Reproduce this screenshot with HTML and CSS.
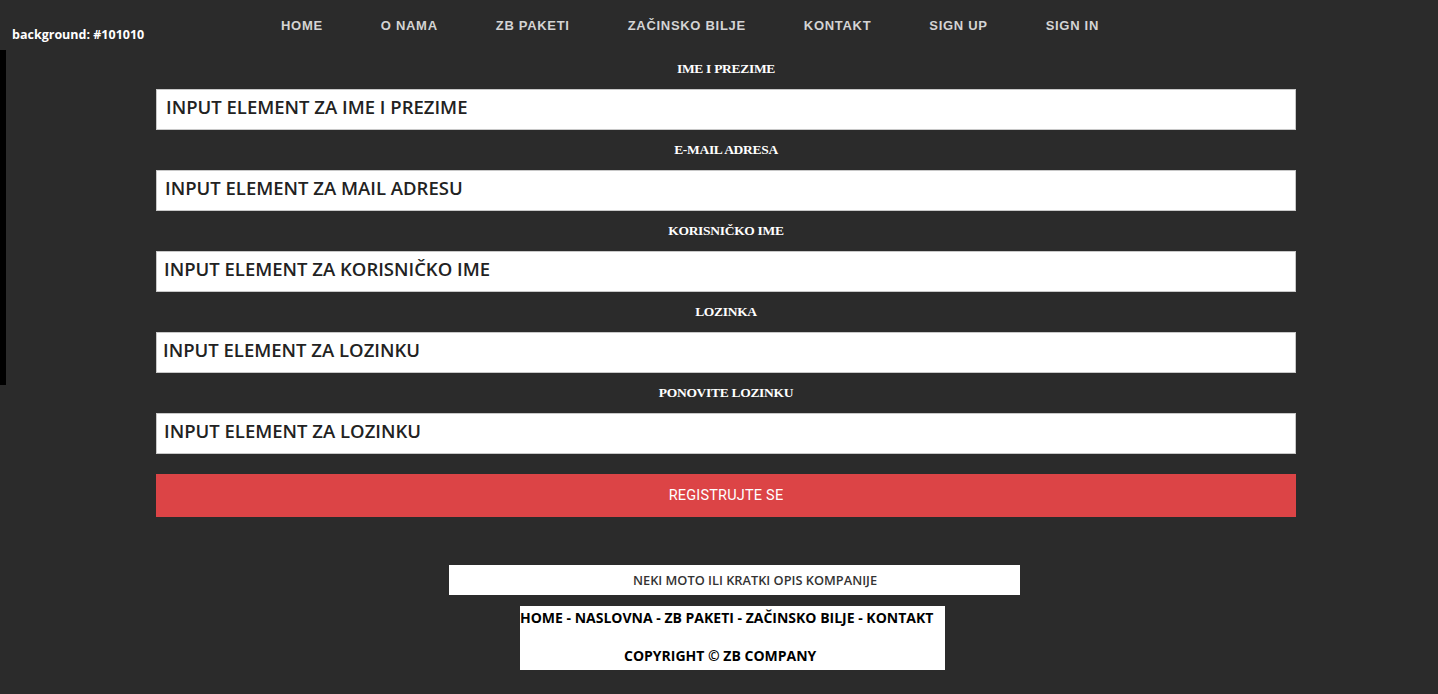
FILE: index.html
```html
<!DOCTYPE html>
<html lang="sr">
<head>
<meta charset="utf-8">
<title>Sign up</title>
<link rel="stylesheet" href="styles.css">
</head>
<body>
<div class="note">background: #101010</div>
<div class="side-bar"></div>
<header class="top">
  <nav class="nav">
    <a href="#">HOME</a>
    <a href="#">O NAMA</a>
    <a href="#">ZB PAKETI</a>
    <a href="#">ZAČINSKO BILJE</a>
    <a href="#">KONTAKT</a>
    <a href="#">SIGN UP</a>
    <a href="#">SIGN IN</a>
  </nav>
</header>
<form class="form">
  <label class="lbl">IME I PREZIME</label>
  <div class="field"><span class="t1">INPUT ELEMENT ZA IME I PREZIME</span></div>
  <label class="lbl">E-MAIL ADRESA</label>
  <div class="field"><span class="t2">INPUT ELEMENT ZA MAIL ADRESU</span></div>
  <label class="lbl">KORISNIČKO IME</label>
  <div class="field"><span class="t3">INPUT ELEMENT ZA KORISNIČKO IME</span></div>
  <label class="lbl">LOZINKA</label>
  <div class="field"><span class="t4">INPUT ELEMENT ZA LOZINKU</span></div>
  <label class="lbl">PONOVITE LOZINKU</label>
  <div class="field"><span class="t3">INPUT ELEMENT ZA LOZINKU</span></div>
  <button type="button" class="btn">REGISTRUJTE SE</button>
</form>
<footer class="foot">
  <div class="moto">NEKI MOTO ILI KRATKI OPIS KOMPANIJE</div>
  <div class="links">
    <div class="links-row">HOME - NASLOVNA - ZB PAKETI - ZAČINSKO BILJE - KONTAKT</div>
    <div class="copy">COPYRIGHT © ZB COMPANY</div>
  </div>
</footer>
</body>
</html>
```
FILE: styles.css
```css
* { box-sizing: border-box; }
html, body { margin: 0; padding: 0; }
body {
  background: #2b2b2b;
  width: 1438px;
  height: 694px;
  overflow: hidden;
  position: relative;
  font-family: "Open Sans", "Liberation Sans", sans-serif;
}
.note {
  position: absolute;
  left: 12px;
  top: 26px;
  color: #fff;
  font-family: "Open Sans", sans-serif;
  font-weight: 700;
  font-size: 12.5px;
  line-height: 18px;
}
.side-bar {
  position: absolute;
  left: 0;
  top: 50px;
  width: 6px;
  height: 335px;
  background: #000;
}
.top {
  height: 49px;
}
.nav {
  display: flex;
  padding-left: 281px;
  padding-top: 17px;
  gap: 58px;
}
.nav a {
  color: #d4d4d4;
  text-decoration: none;
  font-family: "Liberation Sans", Arial, sans-serif;
  font-weight: 700;
  font-size: 13px;
  line-height: 17px;
  letter-spacing: 0.7px;
}
.form {
  margin-left: 156px;
  width: 1140px;
  display: flex;
  flex-direction: column;
}
.lbl {
  display: block;
  height: 40px;
  line-height: 40px;
  text-align: center;
  color: #fff;
  font-family: "Liberation Serif", "Times New Roman", serif;
  font-weight: 700;
  font-size: 13.5px;
  letter-spacing: -0.3px;
}
.field {
  height: 41px;
  background: #fff;
  border: 1px solid #c8c8c8;
  display: flex;
  align-items: center;
  padding-bottom: 7px;
  color: #222;
  font-family: "Open Sans", sans-serif;
  font-weight: 600;
  font-size: 18.5px;
}
.t1 { padding-left: 9px; }
.t2 { padding-left: 8px; }
.t3 { padding-left: 7px; }
.t4 { padding-left: 6px; }
.btn {
  margin-top: 20px;
  height: 43px;
  border: 0;
  background: #dc4446;
  color: #fff;
  font-family: Roboto, "Liberation Sans", sans-serif;
  font-size: 14.5px;
  letter-spacing: 0.2px;
  padding: 0;
  cursor: pointer;
}
.foot {
  padding-top: 48px;
}
.moto {
  margin-left: 449px;
  width: 571px;
  height: 30px;
  background: #fff;
  color: #333;
  font-family: "Open Sans", sans-serif;
  font-weight: 600;
  font-size: 12.8px;
  line-height: 30px;
  padding-left: 184px;
}
.links {
  margin-left: 520px;
  margin-top: 11px;
  width: 425px;
  height: 64px;
  background: #fff;
  color: #000;
  font-family: "Open Sans", sans-serif;
  font-weight: 700;
  font-size: 14px;
  padding-top: 1px;
}
.links-row {
  line-height: 21px;
  white-space: nowrap;
}
.copy {
  margin-top: 17px;
  line-height: 21px;
  padding-left: 104px;
}
```
